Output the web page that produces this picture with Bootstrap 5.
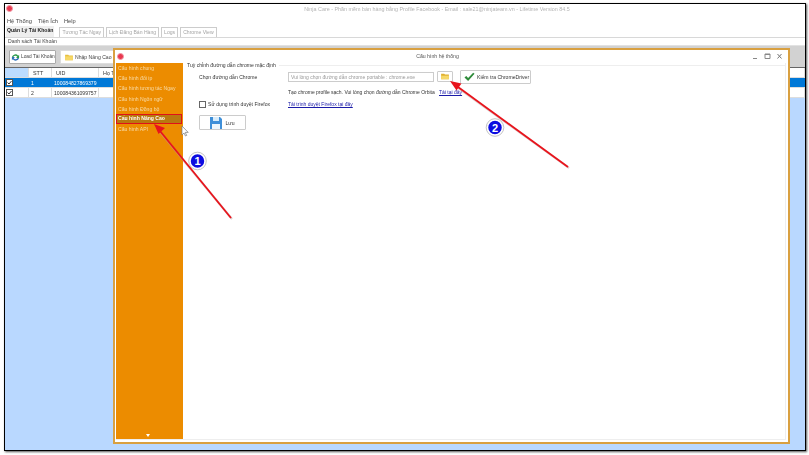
<!DOCTYPE html>
<html lang="vi">
<head>
  <meta charset="UTF-8" />
  <meta name="viewport" content="width=device-width, initial-scale=1" />
  <title>Ninja Care</title>
  <link href="https://cdn.jsdelivr.net/npm/bootstrap@5.3.3/dist/css/bootstrap.min.css" rel="stylesheet" />
  <style>
    html, body { height: 100%; background: #fff; overflow: hidden; }
    body { font-family: "Liberation Sans", sans-serif; font-size: 5.1px; line-height: 10px; color: #333; }
    svg { flex: none; }
    .shot { position: relative; width: 809px; height: 455px; padding: 3px 3px 4px 4px; }
    .app-win { height: 100%; border: 1px solid #000; box-shadow: 1px 1px 2px #555; background: #b9d8ff; display: flex; flex-direction: column; overflow: hidden; }
    .app-top { background: #fff; }
    .app-title { height: 10px; position: relative; color: #b4b4b4; text-align: center; padding-left: 64px; font-size: 5.4px; }
    .red-dot { display: block; width: 7px; height: 7px; border-radius: 50%; background: #e8384f; border: 1.5px solid #f29aa6; flex: none; }
    .app-title .red-dot { position: absolute; left: 1px; top: 1px; }
    .app-menu { height: 11px; padding: 2px 0 0 2px; gap: 6px; color: #444; font-size: 5.7px; }
    .app-tabs { height: 13px; padding-left: 1px; border-bottom: 1px solid #d8d8d8; gap: 2px; }
    .app-tab { height: 10px; margin-top: 2px; line-height: 9px; padding: 0 2px; border: 1px solid #ccc; border-bottom: 0; color: #a4a4a4; }
    .app-tab.on { border: 0; background: #eee; color: #222; font-weight: 700; margin: 1px 3px 0 0; height: 11px; padding: 0 1px; }
    .app-sub { height: 8px; line-height: 7px; padding-left: 3px; color: #444; border-bottom: 1px solid #e2e2e2; }
    .app-tools { height: 22px; background: #d2d2d2; padding: 4px 0 0 4px; gap: 4px; border-bottom: 1px solid #666; }
    .tool-btn { height: 14px; background: #fff; border: 1px solid #ddd; border-radius: 1px; padding: 0; display: flex; align-items: center; gap: 1px; font-size: 5.1px; line-height: 10px; color: #444; white-space: nowrap; overflow: hidden; }
    .tool-load { width: 47px; padding-left: 1px; border-color: #aaa; font-size: 4.8px; }
    .tool-import { width: 60px; padding-left: 4px; gap: 2px; }
    .grid-wrap { flex: 1; }
    .grid-row { display: flex; height: 10px; background: #fff; border-bottom: 1px solid #ddd; }
    .grid-row > div { border-right: 1px solid #ddd; padding-left: 2px; overflow: hidden; white-space: nowrap; }
    .grid-row > div:nth-child(1) { width: 24px; padding-left: 1px; }
    .grid-row > div:nth-child(2) { width: 23px; }
    .grid-row > div:nth-child(3) { width: 47px; }
    .grid-row > div:nth-child(4) { flex: 1; }
    .grid-row.head > div { padding-left: 4px; font-size: 5.4px; }
    .grid-row.head > div:nth-child(1) { background: #bcdcff; }
    .grid-row.sel { background: #0078d7; color: #fff; }
    .grid-row.sel > div { border-color: #0078d7; }
    .tick { display: inline-block; width: 7px; height: 7px; margin-top: 1px; border: 1px solid #555; background: #fff; vertical-align: top; }
    .tick svg { display: block; }
    .dlg { position: absolute; left: 113px; top: 48px; width: 677px; height: 396px; background: #fff; border: 2px solid #d9a040; display: flex; flex-direction: column; }
    .dlg-title { height: 13px; position: relative; text-align: center; color: #555; line-height: 13px; flex: none; padding-right: 28px; font-size: 5.2px; }
    .dlg-title .red-dot { position: absolute; left: 2px; top: 3px; }
    .win-ctrl { position: absolute; right: 5px; top: 2px; gap: 5px; color: #777; }
    .dlg-body { flex: 1; display: flex; margin: 0 2px 2px 1px; border: 1px solid #eee; border-left: 0; border-top: 0; min-height: 0; }
    .side { width: 67px; background: #ec8c00; color: #f8dca8; position: relative; flex: none; }
    .side-item { height: 10.2px; line-height: 10px; padding-left: 2px; white-space: nowrap; }
    .side-item.on { background: #b9780f; color: #fff; font-weight: 700; border: 1.5px solid #e0101a; line-height: 7px; width: 66px; padding-left: 1px; }
    .side-down { position: absolute; left: 30px; bottom: 2px; width: 0; height: 0; border: 2.5px solid transparent; border-top: 3px solid #fff; border-bottom: 0; }
    .pane { flex: 1; padding: 0 0 0 4px; margin-top: -3px; color: #333; min-width: 0; }
    .grp-head { height: 10px; display: flex; align-items: center; gap: 3px; }
    .grp-head i { flex: 1; height: 1px; background: #eee; }
    .pane-row { display: flex; align-items: flex-start; }
    .pane-label { width: 101px; padding-left: 12px; flex: none; white-space: nowrap; }
    .label-chrome { padding-top: 2px; }
    .path-box { width: 146px; height: 10px; margin-top: 2px; padding: 0 2px; font-size: 5px; line-height: 8px; border: 1px solid #ccc; border-radius: 0; color: #999; flex: none; }
    .path-box::placeholder { color: #999; }
    .pick-btn { width: 16px; height: 11px; margin: 1px 0 0 3px; background: #fff; border: 1px solid #ccc; border-radius: 1px; padding: 0; display: flex; align-items: center; justify-content: center; flex: none; }
    .check-btn { width: 71px; height: 14px; margin-left: 7px; background: #fff; border: 1px solid #ccc; border-radius: 1px; padding: 0 0 0 3px; display: flex; align-items: center; gap: 2px; font-size: 5.1px; color: #333; white-space: nowrap; flex: none; }
    .pane a { color: #1a1aa8; font-size: 5px; }
    .ff-check { width: 7px; height: 7px; margin-right: 2px; border: 1px solid #666; display: inline-block; flex: none; }
    .save-btn { width: 47px; height: 15px; margin: 6px 0 0 12px; background: #fff; border: 1px solid #ccc; border-radius: 1px; padding: 0; display: flex; align-items: center; justify-content: center; gap: 3px; font-size: 5.1px; color: #333; }
    .tip-row { margin-top: 3px; }
    .tip-gap { width: 101px; flex: none; }
    .tip-text { width: 151px; white-space: nowrap; flex: none; font-size: 5px; }
    .ff-row { margin-top: 2px; }
    .soft { filter: blur(.3px); }
    .marks { position: absolute; left: 0; top: 0; pointer-events: none; }
  </style>
</head>
<body>
  <div class="shot">
    <div class="app-win">
      <div class="app-top soft">
        <div class="app-title"><span class="red-dot"></span>Ninja Care - Phần mềm bán hàng bằng Profile Facebook - Email : sale21@ninjateam.vn - Lifetime Version 84.5</div>
        <div class="app-menu d-flex"><span>Hệ Thống</span><span>Tiện Ích</span><span>Help</span></div>
        <div class="app-tabs d-flex">
          <div class="app-tab on">Quản Lý Tài Khoản</div>
          <div class="app-tab">Tương Tác Ngay</div>
          <div class="app-tab">Lịch Đăng Bán Hàng</div>
          <div class="app-tab">Logs</div>
          <div class="app-tab">Chrome View</div>
        </div>
        <div class="app-sub">Danh sách Tài Khoản</div>
      </div>
      <div class="app-tools d-flex soft">
        <button class="tool-btn tool-load" type="button">
          <svg width="9" height="9" viewBox="0 0 10 10"><path d="M1 4.500A4 4 0 0 1 8 3L9 2v3.500H5.500L7 4.300A2.600 2.600 0 0 0 2.600 4.500z" fill="#2a9a4a"/><path d="M9 5.500A4 4 0 0 1 2 7L1 8V4.500h3.500L3 5.700a2.600 2.600 0 0 0 4.400-.2z" fill="#2b6fb8"/></svg>
          Load Tài Khoản
        </button>
        <button class="tool-btn tool-import" type="button">
          <svg width="8" height="7" viewBox="0 0 10 9"><path d="M0 1h4l1 1h5v6H0z" fill="#e8c040"/><path d="M0 3h10v5H0z" fill="#f6d868"/></svg>
          Nhập Nâng Cao
        </button>
      </div>
      <div class="grid-wrap soft">
        <div class="grid-row head"><div></div><div>STT</div><div>UID</div><div>Họ Tên</div></div>
        <div class="grid-row sel"><div><span class="tick"><svg width="5" height="5" viewBox="0 0 5 5"><path d="M.5 2.500l1.500 1.500L4.500 1" fill="none" stroke="#222" stroke-width=".9"/></svg></span></div><div>1</div><div>100084827869379</div><div></div></div>
        <div class="grid-row"><div><span class="tick"><svg width="5" height="5" viewBox="0 0 5 5"><path d="M.5 2.500l1.500 1.500L4.500 1" fill="none" stroke="#222" stroke-width=".9"/></svg></span></div><div>2</div><div>100084361099757</div><div></div></div>
      </div>
    </div>

    <div class="dlg">
      <div class="dlg-title soft">
        <span class="red-dot"></span>Cấu hình hệ thống
        <div class="win-ctrl d-flex align-items-center">
          <svg width="7" height="8" viewBox="0 0 7 8"><path d="M1 6.500h4" stroke="#888" stroke-width="1"/></svg>
          <svg width="7" height="8" viewBox="0 0 7 8"><path d="M1 2h5v4.500H1z" fill="none" stroke="#888" stroke-width="1"/><path d="M1 2.500h5" stroke="#888" stroke-width="1"/></svg>
          <svg width="7" height="8" viewBox="0 0 7 8"><path d="M1.500 2l4 4.500M5.500 2l-4 4.500" stroke="#777" stroke-width="1"/></svg>
        </div>
      </div>
      <div class="dlg-body">
        <div class="side soft">
          <div class="side-item">Cấu hình chung</div>
          <div class="side-item">Cấu hình đổi ip</div>
          <div class="side-item">Cấu hình tương tác Ngay</div>
          <div class="side-item">Cấu hình Ngôn ngữ</div>
          <div class="side-item">Cấu hình Đồng bộ</div>
          <div class="side-item on">Cấu hình Nâng Cao</div>
          <div class="side-item">Cấu hình API</div>
          <span class="side-down"></span>
        </div>
        <div class="pane soft">
          <div class="grp-head"><span>Tuỳ chỉnh đường dẫn chrome mặc định</span><i></i></div>
          <div class="pane-row">
            <div class="pane-label label-chrome">Chọn đường dẫn Chrome</div>
            <input class="form-control path-box" type="text" placeholder="Vui lòng chọn đường dẫn chrome portable : chrome.exe" />
            <button class="pick-btn" type="button"><svg width="8" height="7" viewBox="0 0 10 9"><path d="M0 1h4l1 1h5v6H0z" fill="#e0b030"/><path d="M0 3.500h10V8H0z" fill="#f6d868"/></svg></button>
            <button class="check-btn" type="button">
              <svg width="11" height="10" viewBox="0 0 12 10"><path d="M.5 5.500L2.500 4l2 2.200L10 .5l1.500 1-7 8z" fill="#2e8b3a"/></svg>
              Kiểm tra ChromeDriver
            </button>
          </div>
          <div class="pane-row tip-row">
            <div class="tip-gap"></div>
            <div class="tip-text">Tạo chrome profile sạch. Vui lòng chọn đường dẫn Chrome Orbita</div>
            <a href="#">Tải tại đây</a>
          </div>
          <div class="pane-row ff-row">
            <div class="pane-label d-flex align-items-center"><span class="ff-check"></span>Sử dụng trình duyệt Firefox</div>
            <a href="#">Tải trình duyệt Firefox tại đây</a>
          </div>
          <button class="save-btn" type="button">
            <svg width="12" height="12" viewBox="0 0 12 12"><path d="M0 0h10l2 2v10H0z" fill="#3f8fd8"/><path d="M3 0h6v4H3z" fill="#d8ecfb"/><path d="M2 7h8v5H2z" fill="#eef6fc"/></svg>
            Lưu
          </button>
        </div>
      </div>
    </div>

    <svg class="marks" width="809" height="455" viewBox="0 0 809 455">
      <path d="M182 126v9l2-2 1.500 3 1.200-.6-1.500-3h3z" fill="#fff" stroke="#777" stroke-width=".7"/>
      <g stroke="#b9a0a0" fill="none" opacity=".5">
        <path d="M232 219L160 132" stroke-width="2"/>
        <path d="M569 168L458 88" stroke-width="2"/>
      </g>
      <g stroke="#e8141c" fill="#e8141c">
        <path d="M231 218L160 131" stroke-width="1.800"/>
        <path d="M154 124l11 4-6.500 6z" stroke="none"/>
        <path d="M568 167L458 87" stroke-width="1.800"/>
        <path d="M450 81l11.500 2.500-5 7z" stroke="none"/>
      </g>
      <circle cx="197.500" cy="161" r="7.500" fill="#0c0ce0" stroke="#fff" stroke-width="1.500"/>
      <circle cx="197.500" cy="161" r="8.800" fill="none" stroke="#888" stroke-width=".5"/>
      <text x="197.500" y="165" text-anchor="middle" font-family="Liberation Sans, sans-serif" font-weight="700" font-size="11" fill="#fff">1</text>
      <circle cx="495" cy="127.500" r="7.500" fill="#0c0ce0" stroke="#fff" stroke-width="1.500"/>
      <circle cx="495" cy="127.500" r="8.800" fill="none" stroke="#888" stroke-width=".5"/>
      <text x="495" y="131.500" text-anchor="middle" font-family="Liberation Sans, sans-serif" font-weight="700" font-size="11" fill="#fff">2</text>
    </svg>
  </div>
  <script src="https://cdn.jsdelivr.net/npm/bootstrap@5.3.3/dist/js/bootstrap.bundle.min.js"></script>
</body>
</html>
